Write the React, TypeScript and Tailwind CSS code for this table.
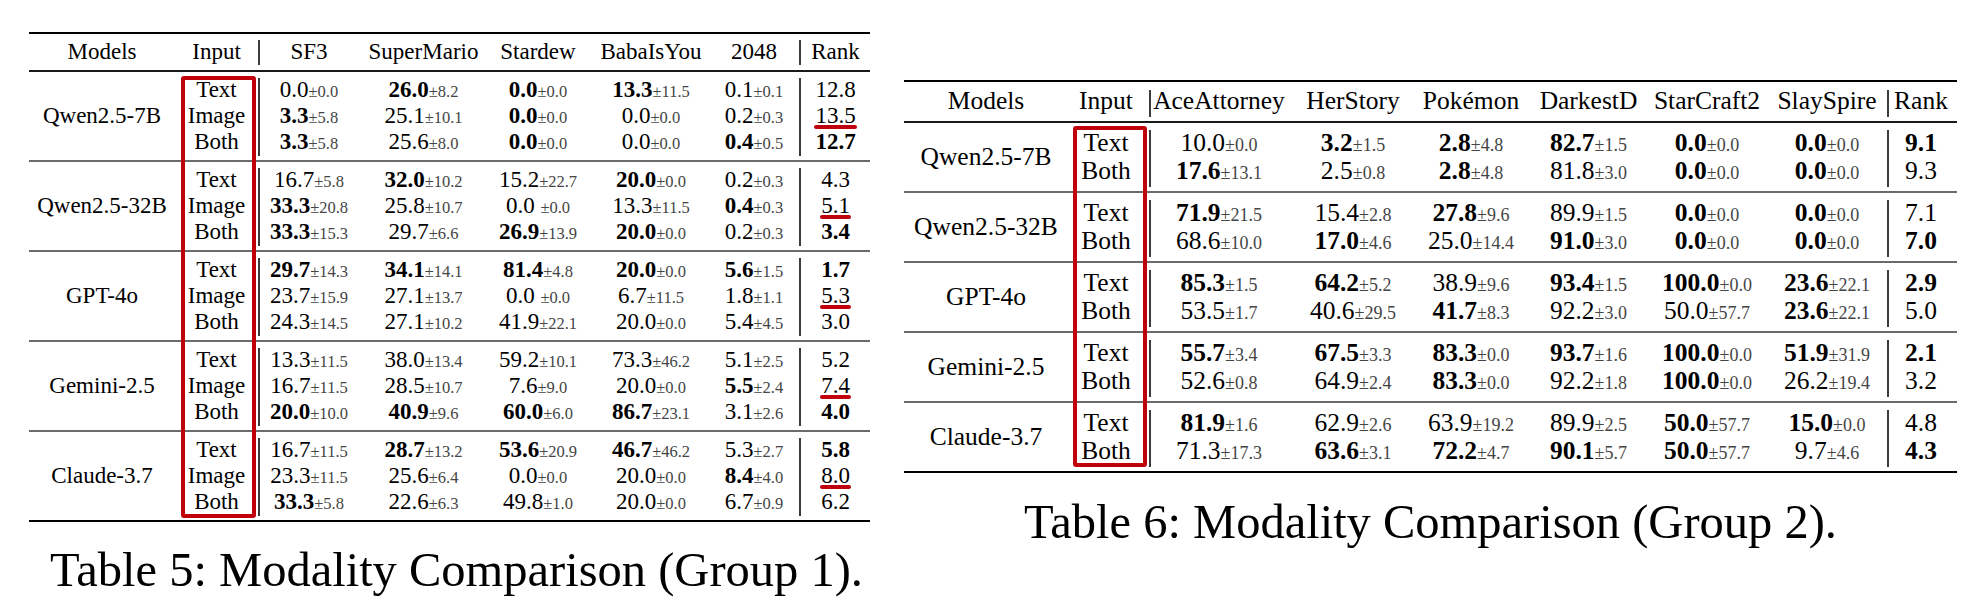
import React from "react";

// Modality comparison tables (two booktabs-style tables side by side)

type Col = { name: string; cls: string };
type Group = { model: string; rows: string[][] };

interface TableProps {
  cols: Col[];
  groups: Group[];
  widthCls: string;
  fontCls: string;
  stdCls: string;
  rowCls: string;
  groupCls: string;
  headerCls: string;
  modelCls: string;
  inputCls: string;
  rankCls: string;
  headLineCls: string;
  bodyLineCls: string;
  boxCls: string;
  underline?: boolean;
}

const T1_COLS: Col[] = [
  { name: "SF3", cls: "w-[106px] pr-[8px]" },
  { name: "SuperMario", cls: "w-[115px]" },
  { name: "Stardew", cls: "w-[114px]" },
  { name: "BabaIsYou", cls: "w-[108px] pl-[4px]" },
  { name: "2048", cls: "w-[96px] pl-[6px]" },
];

// row = [input, ...cells, rank]; "*" bold, "_" red underline, "|" splits the std
const T1: Group[] = [
  {
    model: "Qwen2.5-7B",
    rows: [
      ["Text", "0.0|0.0", "*26.0|8.2", "*0.0|0.0", "*13.3|11.5", "0.1|0.1", "12.8"],
      ["Image", "*3.3|5.8", "25.1|10.1", "*0.0|0.0", "0.0|0.0", "0.2|0.3", "_13.5"],
      ["Both", "*3.3|5.8", "25.6|8.0", "*0.0|0.0", "0.0|0.0", "*0.4|0.5", "*12.7"],
    ],
  },
  {
    model: "Qwen2.5-32B",
    rows: [
      ["Text", "16.7|5.8", "*32.0|10.2", "15.2|22.7", "*20.0|0.0", "0.2|0.3", "4.3"],
      ["Image", "*33.3|20.8", "25.8|10.7", "0.0 |0.0", "13.3|11.5", "*0.4|0.3", "_5.1"],
      ["Both", "*33.3|15.3", "29.7|6.6", "*26.9|13.9", "*20.0|0.0", "0.2|0.3", "*3.4"],
    ],
  },
  {
    model: "GPT-4o",
    rows: [
      ["Text", "*29.7|14.3", "*34.1|14.1", "*81.4|4.8", "*20.0|0.0", "*5.6|1.5", "*1.7"],
      ["Image", "23.7|15.9", "27.1|13.7", "0.0 |0.0", "6.7|11.5", "1.8|1.1", "_5.3"],
      ["Both", "24.3|14.5", "27.1|10.2", "41.9|22.1", "20.0|0.0", "5.4|4.5", "3.0"],
    ],
  },
  {
    model: "Gemini-2.5",
    rows: [
      ["Text", "13.3|11.5", "38.0|13.4", "59.2|10.1", "73.3|46.2", "5.1|2.5", "5.2"],
      ["Image", "16.7|11.5", "28.5|10.7", "7.6|9.0", "20.0|0.0", "*5.5|2.4", "_7.4"],
      ["Both", "*20.0|10.0", "*40.9|9.6", "*60.0|6.0", "*86.7|23.1", "3.1|2.6", "*4.0"],
    ],
  },
  {
    model: "Claude-3.7",
    rows: [
      ["Text", "16.7|11.5", "*28.7|13.2", "*53.6|20.9", "*46.7|46.2", "5.3|2.7", "*5.8"],
      ["Image", "23.3|11.5", "25.6|6.4", "0.0|0.0", "20.0|0.0", "*8.4|4.0", "_8.0"],
      ["Both", "*33.3|5.8", "22.6|6.3", "49.8|1.0", "20.0|0.0", "6.7|0.9", "6.2"],
    ],
  },
];

const T2_COLS: Col[] = [
  { name: "AceAttorney", cls: "w-[136px]" },
  { name: "HerStory", cls: "w-[125px] pl-[7px]" },
  { name: "Pokémon", cls: "w-[118px]" },
  { name: "DarkestD", cls: "w-[117px]" },
  { name: "StarCraft2", cls: "w-[120px]" },
  { name: "SlaySpire", cls: "w-[120px]" },
];

const T2: Group[] = [
  {
    model: "Qwen2.5-7B",
    rows: [
      ["Text", "10.0|0.0", "*3.2|1.5", "*2.8|4.8", "*82.7|1.5", "*0.0|0.0", "*0.0|0.0", "*9.1"],
      ["Both", "*17.6|13.1", "2.5|0.8", "*2.8|4.8", "81.8|3.0", "*0.0|0.0", "*0.0|0.0", "9.3"],
    ],
  },
  {
    model: "Qwen2.5-32B",
    rows: [
      ["Text", "*71.9|21.5", "15.4|2.8", "*27.8|9.6", "89.9|1.5", "*0.0|0.0", "*0.0|0.0", "7.1"],
      ["Both", "68.6|10.0", "*17.0|4.6", "25.0|14.4", "*91.0|3.0", "*0.0|0.0", "*0.0|0.0", "*7.0"],
    ],
  },
  {
    model: "GPT-4o",
    rows: [
      ["Text", "*85.3|1.5", "*64.2|5.2", "38.9|9.6", "*93.4|1.5", "*100.0|0.0", "*23.6|22.1", "*2.9"],
      ["Both", "53.5|1.7", "40.6|29.5", "*41.7|8.3", "92.2|3.0", "50.0|57.7", "*23.6|22.1", "5.0"],
    ],
  },
  {
    model: "Gemini-2.5",
    rows: [
      ["Text", "*55.7|3.4", "*67.5|3.3", "*83.3|0.0", "*93.7|1.6", "*100.0|0.0", "*51.9|31.9", "*2.1"],
      ["Both", "52.6|0.8", "64.9|2.4", "*83.3|0.0", "92.2|1.8", "*100.0|0.0", "26.2|19.4", "3.2"],
    ],
  },
  {
    model: "Claude-3.7",
    rows: [
      ["Text", "*81.9|1.6", "62.9|2.6", "63.9|19.2", "89.9|2.5", "*50.0|57.7", "*15.0|0.0", "4.8"],
      ["Both", "71.3|17.3", "*63.6|3.1", "*72.2|4.7", "*90.1|5.7", "*50.0|57.7", "9.7|4.6", "*4.3"],
    ],
  },
];

function Value({ v, stdCls }: { v: string; stdCls: string }) {
  const bold = v.startsWith("*");
  const [val, std] = (bold ? v.slice(1) : v).split("|");
  return (
    <span className="whitespace-pre">
      <span className={bold ? "font-bold" : ""}>{val}</span>
      <span className={stdCls}>±{std}</span>
    </span>
  );
}

function Rank({ v }: { v: string }) {
  if (v.startsWith("*")) return <span className="font-bold">{v.slice(1)}</span>;
  if (v.startsWith("_"))
    return (
      <span className="relative inline-block">
        {v.slice(1)}
        <span className="absolute -left-[1px] -right-[1px] top-[22px] h-[4px] rounded-full bg-[#c0000b]" />
      </span>
    );
  return <span>{v}</span>;
}

function Table(p: TableProps) {
  const n = p.cols.length;
  return (
    <div className={`relative shrink-0 ${p.widthCls} ${p.fontCls}`}>
      <div className="h-[2px] bg-black" />
      {/* header */}
      <div className={`flex ${p.headerCls}`}>
        <div className={`${p.modelCls} shrink-0 flex items-center justify-center`}>Models</div>
        <div className={`${p.inputCls} shrink-0 flex items-center justify-center`}>Input</div>
        <div className={`w-[2px] shrink-0 bg-[#3c3c3c] ${p.headLineCls}`} />
        {p.cols.map((c) => (
          <div key={c.name} className={`${c.cls} shrink-0 flex items-center justify-center`}>
            {c.name}
          </div>
        ))}
        <div className={`w-[2px] shrink-0 bg-[#3c3c3c] ${p.headLineCls}`} />
        <div className={`${p.rankCls} shrink-0 flex items-center justify-center`}>Rank</div>
      </div>
      <div className="h-[2px] bg-[#1a1a1a]" />

      {p.groups.map((g, gi) => (
        <React.Fragment key={g.model}>
          {gi > 0 && <div className="h-[2px] bg-[#6b6b6b]" />}
          <div className={`flex ${p.groupCls}`}>
            <div className={`${p.modelCls} shrink-0 flex items-center justify-center`}>{g.model}</div>
            <div className={`${p.inputCls} shrink-0 flex flex-col justify-center`}>
              {g.rows.map((r) => (
                <div key={r[0]} className={`${p.rowCls} text-center`}>
                  {r[0]}
                </div>
              ))}
            </div>
            <div className={`w-[2px] shrink-0 bg-[#3c3c3c] ${p.bodyLineCls}`} />
            {p.cols.map((c, ci) => (
              <div key={c.name} className={`${c.cls} shrink-0 flex flex-col justify-center`}>
                {g.rows.map((r) => (
                  <div key={r[0]} className={`${p.rowCls} flex justify-center`}>
                    <Value v={r[ci + 1]} stdCls={p.stdCls} />
                  </div>
                ))}
              </div>
            ))}
            <div className={`w-[2px] shrink-0 bg-[#3c3c3c] ${p.bodyLineCls}`} />
            <div className={`${p.rankCls} shrink-0 flex flex-col justify-center`}>
              {g.rows.map((r) => (
                <div key={r[0]} className={`${p.rowCls} flex justify-center`}>
                  <Rank v={r[n + 1]} />
                </div>
              ))}
            </div>
          </div>
        </React.Fragment>
      ))}
      <div className="h-[2px] bg-black" />

      {/* red highlight around the Input column */}
      <div className={`absolute border-4 border-[#c0000b] rounded-[3px] ${p.boxCls}`} />
    </div>
  );
}

export default function App() {
  return (
    <div className="w-[1982px] h-[613px] overflow-hidden bg-white text-black font-['Liberation_Serif',serif] flex items-start pl-[29px] pt-[32px] gap-[34px]">
      <div className="flex flex-col">
        <Table
          cols={T1_COLS}
          groups={T1}
          widthCls="w-[841px]"
          fontCls="text-[23px]"
          stdCls="text-[16.5px] text-[#444]"
          rowCls="h-[26px] leading-[26px]"
          groupCls="h-[88px]"
          headerCls="h-[36px]"
          modelCls="w-[146px]"
          inputCls="w-[83px]"
          rankCls="w-[69px]"
          headLineCls="mt-[6px] mb-[5px]"
          bodyLineCls="mt-[6px] mb-[4px]"
          boxCls="left-[152px] top-[44px] w-[75px] h-[442px]"
          underline
        />
        <div className="mt-[24px] pl-[14px] text-center text-[48.5px] leading-none">
          Table 5: Modality Comparison (Group 1).
        </div>
      </div>

      <div className="flex flex-col mt-[48px]">
        <Table
          cols={T2_COLS}
          groups={T2}
          widthCls="w-[1053px]"
          fontCls="text-[25.5px]"
          stdCls="text-[18px] text-[#444]"
          rowCls="h-[28px] leading-[28px]"
          groupCls="h-[68px]"
          headerCls="h-[39px]"
          modelCls="w-[164px]"
          inputCls="w-[81px] pr-[5px]"
          rankCls="w-[68px] pr-[4px]"
          headLineCls="mt-[8px] mb-[4px]"
          bodyLineCls="mt-[7px] mb-[4px]"
          boxCls="left-[169px] top-[46px] w-[74px] h-[341px]"
        />
        <div className="mt-[25px] text-center text-[48.5px] leading-none">
          Table 6: Modality Comparison (Group 2).
        </div>
      </div>
    </div>
  );
}
